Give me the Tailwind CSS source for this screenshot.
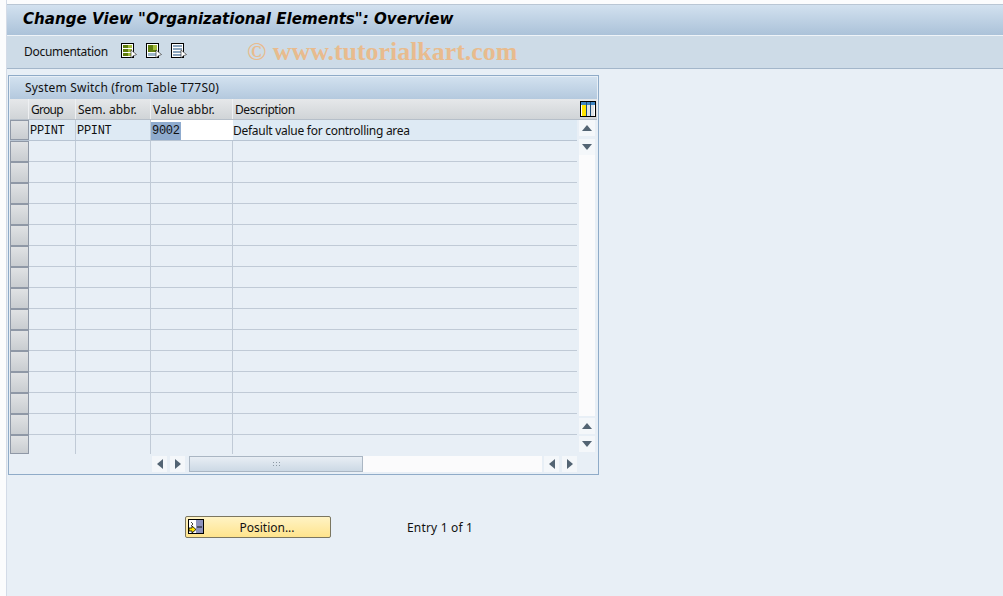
<!DOCTYPE html>
<html><head><meta charset="utf-8"><title>Change View</title>
<script src="https://cdn.jsdelivr.net/npm/@tailwindcss/browser@4"></script></head>
<body class="w-[1003px] h-[596px] overflow-hidden bg-[#fbfcfd] font-['Noto_Sans',sans-serif] text-[12px] text-[#111]">
<div class="flex h-[596px]">
<div class="w-[6px] shrink-0"></div>
<div class="flex-1 flex flex-col border-l border-[#d3dbe7] bg-[#e8eff6]">
  <div class="h-[4px] bg-[#fbfcfd] shrink-0"></div>
  <div class="h-[31px] shrink-0 border-t border-[#b9c6d4] bg-gradient-to-b from-[#d2e1ef] to-[#abc2d9] pl-[16px] pb-[2px] flex items-center font-['DejaVu_Sans',sans-serif] font-bold italic text-[15.100px] text-black whitespace-nowrap">Change View "Organizational Elements": Overview</div>
  <div class="h-[34px] shrink-0 border-t border-[#eef3f8] border-b border-b-[#a3b6ca] bg-[#cddbe7] pl-[17px] flex items-center relative">
    <span class="w-[97px] tracking-[-0.300px]">Documentation</span>
    <div class="flex gap-[9px] -mt-[2px]">
      <svg width="16" height="16" viewBox="0 0 16 16"><rect x=".5" y=".5" width="12" height="14" fill="#fff" stroke="#000"/><rect x="2" y="2" width="9" height="3" fill="#5f7d0c"/><rect x="2" y="6" width="9" height="3" fill="#5f7d0c"/><rect x="2" y="10" width="9" height="3" fill="#5f7d0c"/><rect x="7" y="2" width="4" height="3" fill="#a4bd3c"/><rect x="7" y="6" width="4" height="3" fill="#a4bd3c"/><rect x="7" y="10" width="4" height="3" fill="#a4bd3c"/><path d="M10 7v8l2-2 3.500-1.500z" fill="#fff" stroke="#222" stroke-width=".6"/></svg>
      <svg width="16" height="16" viewBox="0 0 16 16"><rect x=".5" y=".5" width="12" height="14" fill="#fff" stroke="#000"/><rect x="2" y="2" width="9" height="7" fill="#5f7d0c"/><rect x="7" y="2" width="4" height="5" fill="#a4bd3c"/><rect x="2" y="10" width="9" height="3" fill="#9db6c9"/><path d="M10 7v8l2-2 3.500-1.500z" fill="#fff" stroke="#222" stroke-width=".6"/></svg>
      <svg width="16" height="16" viewBox="0 0 16 16"><rect x=".5" y=".5" width="12" height="14" fill="#fff" stroke="#000"/><rect x="2" y="2" width="9" height="2" fill="#8aa4bd"/><rect x="2" y="5" width="9" height="2" fill="#8aa4bd"/><rect x="2" y="8" width="9" height="2" fill="#8aa4bd"/><rect x="2" y="11" width="9" height="2" fill="#8aa4bd"/><path d="M10 7v8l2-2 3.500-1.500z" fill="#fff" stroke="#222" stroke-width=".6"/></svg>
    </div>
    <span class="absolute left-[240px] top-[1px] font-['Liberation_Serif',serif] font-bold text-[25.900px] leading-[30px] text-[#e8bb8e] whitespace-nowrap">© www.tutorialkart.com</span>
  </div>
  <div class="ml-[1px] mt-[6px] w-[591px] h-[400px] shrink-0 border border-[#8fabc8] p-[1px] flex flex-col">
    <div class="h-[22px] shrink-0 bg-gradient-to-b from-[#d2e1ef] to-[#b4c9de] pl-[15px] flex items-center whitespace-nowrap tracking-[0.190px]">System Switch (from Table T77S0)</div>
    <div class="flex h-[21px] shrink-0 border-b border-[#b6bfc9] bg-gradient-to-b from-[#e6e8ea] to-[#d0d4d7]">
      <div class="w-[19px] border-r border-[#eef0f2]"></div>
      <div class="w-[47px] pl-[2px] pt-[1px] border-r border-[#eef0f2] flex items-center tracking-[-0.700px]">Group</div>
      <div class="w-[75px] pl-[2px] pt-[1px] border-r border-[#eef0f2] flex items-center">Sem. abbr.</div>
      <div class="w-[82px] pl-[2px] pt-[1px] border-r border-[#eef0f2] flex items-center">Value abbr.</div>
      <div class="w-[345px] pl-[2px] pt-[1px] flex items-center tracking-[-0.450px]">Description</div>
      <div class="flex-1 flex items-center justify-center">
        <svg width="16" height="16" viewBox="0 0 16 16"><rect x=".5" y=".5" width="15" height="15" fill="#fff" stroke="#000"/><rect x="1" y="1" width="14" height="3" fill="#3f86c4"/><rect x="2" y="4" width="4" height="11" fill="#ffe400"/><rect x="7" y="4" width="3" height="11" fill="#dfe3e6"/><rect x="11" y="4" width="3" height="11" fill="#dfe3e6"/><path d="M6.500 1v14M10.500 1v14" stroke="#1c4c78"/></svg>
      </div>
    </div>
    <div class="flex h-[334px] shrink-0">
      <div class="w-[567px] shrink-0">
        <div class="flex h-[21px] border-b border-[#b8c4d2] bg-[#deeaf4]">
          <div class="w-[19px] shrink-0 bg-gradient-to-b from-[#e0e2e4] to-[#c9cdd1] border border-[#8f98a6]"></div>
          <div class="w-[47px] pl-[1px] pt-[1px] border-r border-[#c0cad6] flex items-center font-['Liberation_Mono',monospace] tracking-[-0.300px]">PPINT</div>
          <div class="w-[75px] pl-[1px] pt-[1px] border-r border-[#c0cad6] flex items-center font-['Liberation_Mono',monospace] tracking-[-0.300px]">PPINT</div>
          <div class="w-[82px] bg-white flex items-center pt-[1px] font-['Liberation_Mono',monospace] tracking-[-0.300px]"><span class="bg-[#8fabce] px-[1px]">9002</span></div>
          <div class="flex-1 pt-[1px] flex items-center whitespace-nowrap tracking-[-0.270px]">Default value for controlling area</div>
        </div>
        <div class="grid grid-cols-[19px_47px_75px_82px_344px] grid-rows-[repeat(14,21px)_19px]">
          <div class="bg-gradient-to-b from-[#e0e2e4] to-[#c9cdd1] border border-[#8f98a6]"></div><div class="border-r border-b border-[#c0cad6]"></div><div class="border-r border-b border-[#c0cad6]"></div><div class="border-r border-b border-[#c0cad6]"></div><div class="border-b border-[#c0cad6]"></div>
          <div class="bg-gradient-to-b from-[#e0e2e4] to-[#c9cdd1] border border-[#8f98a6]"></div><div class="border-r border-b border-[#c0cad6]"></div><div class="border-r border-b border-[#c0cad6]"></div><div class="border-r border-b border-[#c0cad6]"></div><div class="border-b border-[#c0cad6]"></div>
          <div class="bg-gradient-to-b from-[#e0e2e4] to-[#c9cdd1] border border-[#8f98a6]"></div><div class="border-r border-b border-[#c0cad6]"></div><div class="border-r border-b border-[#c0cad6]"></div><div class="border-r border-b border-[#c0cad6]"></div><div class="border-b border-[#c0cad6]"></div>
          <div class="bg-gradient-to-b from-[#e0e2e4] to-[#c9cdd1] border border-[#8f98a6]"></div><div class="border-r border-b border-[#c0cad6]"></div><div class="border-r border-b border-[#c0cad6]"></div><div class="border-r border-b border-[#c0cad6]"></div><div class="border-b border-[#c0cad6]"></div>
          <div class="bg-gradient-to-b from-[#e0e2e4] to-[#c9cdd1] border border-[#8f98a6]"></div><div class="border-r border-b border-[#c0cad6]"></div><div class="border-r border-b border-[#c0cad6]"></div><div class="border-r border-b border-[#c0cad6]"></div><div class="border-b border-[#c0cad6]"></div>
          <div class="bg-gradient-to-b from-[#e0e2e4] to-[#c9cdd1] border border-[#8f98a6]"></div><div class="border-r border-b border-[#c0cad6]"></div><div class="border-r border-b border-[#c0cad6]"></div><div class="border-r border-b border-[#c0cad6]"></div><div class="border-b border-[#c0cad6]"></div>
          <div class="bg-gradient-to-b from-[#e0e2e4] to-[#c9cdd1] border border-[#8f98a6]"></div><div class="border-r border-b border-[#c0cad6]"></div><div class="border-r border-b border-[#c0cad6]"></div><div class="border-r border-b border-[#c0cad6]"></div><div class="border-b border-[#c0cad6]"></div>
          <div class="bg-gradient-to-b from-[#e0e2e4] to-[#c9cdd1] border border-[#8f98a6]"></div><div class="border-r border-b border-[#c0cad6]"></div><div class="border-r border-b border-[#c0cad6]"></div><div class="border-r border-b border-[#c0cad6]"></div><div class="border-b border-[#c0cad6]"></div>
          <div class="bg-gradient-to-b from-[#e0e2e4] to-[#c9cdd1] border border-[#8f98a6]"></div><div class="border-r border-b border-[#c0cad6]"></div><div class="border-r border-b border-[#c0cad6]"></div><div class="border-r border-b border-[#c0cad6]"></div><div class="border-b border-[#c0cad6]"></div>
          <div class="bg-gradient-to-b from-[#e0e2e4] to-[#c9cdd1] border border-[#8f98a6]"></div><div class="border-r border-b border-[#c0cad6]"></div><div class="border-r border-b border-[#c0cad6]"></div><div class="border-r border-b border-[#c0cad6]"></div><div class="border-b border-[#c0cad6]"></div>
          <div class="bg-gradient-to-b from-[#e0e2e4] to-[#c9cdd1] border border-[#8f98a6]"></div><div class="border-r border-b border-[#c0cad6]"></div><div class="border-r border-b border-[#c0cad6]"></div><div class="border-r border-b border-[#c0cad6]"></div><div class="border-b border-[#c0cad6]"></div>
          <div class="bg-gradient-to-b from-[#e0e2e4] to-[#c9cdd1] border border-[#8f98a6]"></div><div class="border-r border-b border-[#c0cad6]"></div><div class="border-r border-b border-[#c0cad6]"></div><div class="border-r border-b border-[#c0cad6]"></div><div class="border-b border-[#c0cad6]"></div>
          <div class="bg-gradient-to-b from-[#e0e2e4] to-[#c9cdd1] border border-[#8f98a6]"></div><div class="border-r border-b border-[#c0cad6]"></div><div class="border-r border-b border-[#c0cad6]"></div><div class="border-r border-b border-[#c0cad6]"></div><div class="border-b border-[#c0cad6]"></div>
          <div class="bg-gradient-to-b from-[#e0e2e4] to-[#c9cdd1] border border-[#8f98a6]"></div><div class="border-r border-b border-[#c0cad6]"></div><div class="border-r border-b border-[#c0cad6]"></div><div class="border-r border-b border-[#c0cad6]"></div><div class="border-b border-[#c0cad6]"></div>
          <div class="bg-gradient-to-b from-[#e0e2e4] to-[#c9cdd1] border border-[#8f98a6]"></div><div class="border-r border-[#c0cad6]"></div><div class="border-r border-[#c0cad6]"></div><div class="border-r border-[#c0cad6]"></div><div></div>
        </div>
      </div>
      <div class="ml-[2px] w-[16px] flex flex-col">
        <div class="h-[16px] bg-[#f4f7fa] flex items-center justify-center"><svg width="10" height="6" viewBox="0 0 10 6"><path d="M5 0l5 6H0z" fill="#536473"/></svg></div>
        <div class="h-[16px] mt-[3px] bg-[#f4f7fa] flex items-center justify-center"><svg width="10" height="6" viewBox="0 0 10 6"><path d="M0 0h10L5 6z" fill="#536473"/></svg></div>
        <div class="flex-1 bg-[#fbfbfc]"></div>
        <div class="h-[16px] mt-[2px] bg-[#f4f7fa] flex items-center justify-center"><svg width="10" height="6" viewBox="0 0 10 6"><path d="M5 0l5 6H0z" fill="#536473"/></svg></div>
        <div class="h-[16px] mt-[2px] mb-[2px] bg-[#f4f7fa] flex items-center justify-center"><svg width="10" height="6" viewBox="0 0 10 6"><path d="M0 0h10L5 6z" fill="#536473"/></svg></div>
      </div>
    </div>
    <div class="flex h-[16px] mt-[2px] ml-[142px] w-[425px]">
      <div class="w-[15px] bg-[#f4f7fa] flex items-center justify-center"><svg width="6" height="10" viewBox="0 0 6 10"><path d="M6 0v10L0 5z" fill="#536473"/></svg></div>
      <div class="w-[15px] ml-[3px] bg-[#f4f7fa] flex items-center justify-center"><svg width="6" height="10" viewBox="0 0 6 10"><path d="M0 0v10l6-5z" fill="#536473"/></svg></div>
      <div class="w-[174px] ml-[4px] border border-[#aab6c3] bg-gradient-to-b from-[#e8eef4] to-[#ccd9e5] flex items-center justify-center"><span class="block w-[9px] h-[7px] bg-[radial-gradient(#8c98a4_1px,transparent_1px)] bg-[length:3px_3px]"></span></div>
      <div class="flex-1 bg-[#fbfbfc]"></div>
      <div class="w-[15px] ml-[2px] bg-[#f4f7fa] flex items-center justify-center"><svg width="6" height="10" viewBox="0 0 6 10"><path d="M6 0v10L0 5z" fill="#536473"/></svg></div>
      <div class="w-[15px] ml-[3px] bg-[#f4f7fa] flex items-center justify-center"><svg width="6" height="10" viewBox="0 0 6 10"><path d="M0 0v10l6-5z" fill="#536473"/></svg></div>
    </div>
  </div>
  <div class="flex items-center mt-[41px] ml-[178px]">
    <div class="w-[146px] h-[22px] rounded-[2px] border border-[#7b7660] bg-gradient-to-b from-[#fff3c4] to-[#ffe48c] flex items-center relative">
      <svg class="absolute left-[2px] top-[2px]" width="16" height="15" viewBox="0 0 16 15"><rect x=".5" y=".5" width="15" height="14" fill="#fff" stroke="#000"/><rect x="8" y="1" width="7" height="13" fill="#8d92bd"/><path d="M9 8h5" stroke="#111"/><path d="M3 3l2 2-2 2" fill="none" stroke="#444"/><path d="M1 9h3V7l4 3.500L4 14v-2H1z" fill="#ffe400" stroke="#000" stroke-width=".8"/></svg>
      <span class="w-full text-center pl-[22px] pr-[4px] pt-[1px]">Position...</span>
    </div>
    <span class="ml-[76px] pt-[1px] tracking-[0.180px]">Entry 1 of 1</span>
  </div>
</div>
</div>
</body></html>
